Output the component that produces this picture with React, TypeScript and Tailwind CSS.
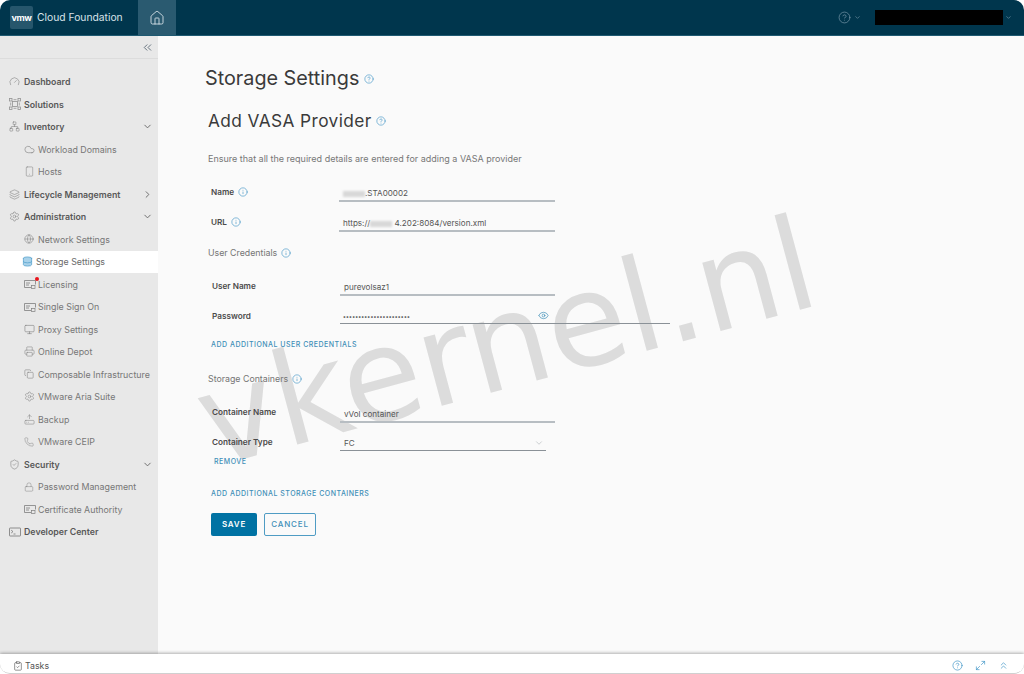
import {
  ChevronDown, ChevronRight, ChevronsLeft, ChevronsUp, Cloud, Copy, Database, Eye, Gauge, HardDriveUpload, HelpCircle,
  Home, Info, Layers, Lock, Maximize2, Monitor, Network, Phone, Printer, Settings, ClipboardCheck, ShieldCheck,
  Smartphone, Globe,
} from "lucide-react";
import type { ReactNode } from "react";

function SolutionsIcon() {
  return (
    <svg width="12" height="12" viewBox="0 0 12 12" fill="none" stroke="currentColor" strokeWidth="0.8" opacity="0.75">
      <rect x="0.5" y="0.5" width="2.5" height="2.5" />
      <rect x="9" y="0.5" width="2.5" height="2.5" />
      <rect x="0.5" y="9" width="2.5" height="2.5" />
      <rect x="9" y="9" width="2.5" height="2.5" />
      <rect x="3.5" y="3.5" width="5" height="5" />
      <path d="M4.5 1.7h3M4.5 10.3h3M1.7 4.5v3M10.3 4.5v3" />
    </svg>
  );
}

function CardIcon({ dot }: { dot?: boolean }) {
  return (
    <span className="relative flex">
      <svg width="12" height="12" viewBox="0 0 12 12" fill="none" stroke="currentColor" strokeWidth="0.8">
        <path d="M7 9.5H.5v-7h11v4" />
        <path d="M2 5h4M2 7h3" />
        <rect x="7.5" y="7.5" width="3.5" height="3" strokeWidth="0.7" />
      </svg>
      {dot && <span className="absolute -top-[1px] -right-[3px] w-[4px] h-[4px] rounded-full bg-[#e8141c]" />}
    </span>
  );
}

function ConsoleIcon() {
  return (
    <svg width="12" height="12" viewBox="0 0 12 12" fill="none" stroke="currentColor" strokeWidth="0.8">
      <rect x="0.5" y="2" width="11" height="8" rx="0.5" />
      <path d="M2.2 4.2 4 5.6 2.2 7M4.5 8h2" />
    </svg>
  );
}

function NavTop({ icon, label, chevron }: { icon: ReactNode; label: string; chevron?: "down" | "right" }) {
  return (
    <div className="h-[22.5px] flex items-center pl-[9px] pr-[5px] text-[#585858]">
      <span className="w-[15px] flex justify-start text-[#767676]">{icon}</span>
      <span className="text-[8.8px] font-semibold whitespace-nowrap">{label}</span>
      {chevron === "down" && <ChevronDown size={11} className="ml-auto text-[#666]" />}
      {chevron === "right" && <ChevronRight size={11} className="ml-auto text-[#666]" />}
    </div>
  );
}

function NavSub({ icon, label, active }: { icon: ReactNode; label: string; active?: boolean }) {
  return (
    <div className={`h-[22.5px] flex items-center text-[8.85px] whitespace-nowrap ${active ? "bg-white pl-[22px] text-[#6b6b6b]" : "pl-[24px] text-[#777]"}`}>
      <span className={`flex w-[14px] ${active ? "text-[#4b9bc9]" : "text-[#7e7e7e]"}`}>{icon}</span>
      <span>{label}</span>
    </div>
  );
}

function Sidebar() {
  return (
    <aside className="w-[158px] shrink-0 bg-[#e8e8e8] flex flex-col">
      <div className="h-[23px] shrink-0 flex items-center justify-end pr-[4px] border-b border-[#dcdcdc] text-[#4a5a68]">
        <ChevronsLeft size={13} strokeWidth={1.5} />
      </div>
      <div className="pt-[11.5px]">
        <NavTop icon={<Gauge size={11} strokeWidth={1.1} />} label="Dashboard" />
        <NavTop icon={<SolutionsIcon />} label="Solutions" />
        <NavTop icon={<Network size={11} strokeWidth={1.1} />} label="Inventory" chevron="down" />
        <NavSub icon={<Cloud size={11} strokeWidth={1.3} />} label="Workload Domains" />
        <NavSub icon={<Smartphone size={11} strokeWidth={1.1} />} label="Hosts" />
        <NavTop icon={<Layers size={11} strokeWidth={1.1} />} label="Lifecycle Management" chevron="right" />
        <NavTop icon={<Settings size={11} strokeWidth={1.1} />} label="Administration" chevron="down" />
        <NavSub icon={<Globe size={10} strokeWidth={1.3} />} label="Network Settings" />
        <NavSub active icon={<Database size={11} strokeWidth={1.5} fill="#a9d2ea" />} label="Storage Settings" />
        <NavSub icon={<CardIcon dot />} label="Licensing" />
        <NavSub icon={<CardIcon />} label="Single Sign On" />
        <NavSub icon={<Monitor size={11} strokeWidth={1.3} />} label="Proxy Settings" />
        <NavSub icon={<Printer size={11} strokeWidth={1.1} />} label="Online Depot" />
        <NavSub icon={<Copy size={10} strokeWidth={1.3} />} label="Composable Infrastructure" />
        <NavSub icon={<Settings size={11} strokeWidth={1.1} />} label="VMware Aria Suite" />
        <NavSub icon={<HardDriveUpload size={11} strokeWidth={1.1} />} label="Backup" />
        <NavSub icon={<Phone size={10} strokeWidth={1.1} />} label="VMware CEIP" />
        <NavTop icon={<ShieldCheck size={11} strokeWidth={1.1} />} label="Security" chevron="down" />
        <NavSub icon={<Lock size={10} strokeWidth={1.1} />} label="Password Management" />
        <NavSub icon={<CardIcon />} label="Certificate Authority" />
        <NavTop icon={<ConsoleIcon />} label="Developer Center" />
      </div>
    </aside>
  );
}

function InfoDot() {
  return <Info size={10} strokeWidth={1.5} className="text-[#3f94c6] shrink-0" />;
}

function HelpDot() {
  return <HelpCircle size={10} strokeWidth={1.5} className="text-[#3f94c6] shrink-0" />;
}

function Blur({ w }: { w: number }) {
  return <span className="inline-block h-[6px] bg-[#d8d8d8] blur-[1px] align-middle" style={{ width: w }} />;
}

function Field({ label, info, value, lineW = 216, thin, right }: {
  label: string; info?: boolean; value: ReactNode; lineW?: number; thin?: boolean; right?: ReactNode;
}) {
  return (
    <div className="flex h-[30px] relative z-10">
      <div className="w-[128px] shrink-0 flex items-center gap-[4px] h-[24px] text-[8.2px] font-semibold text-[#4a4a4a]">
        <span>{label}</span>
        {info && <InfoDot />}
      </div>
      <div
        className={`flex items-center justify-between pl-[4px] text-[8.1px] text-[#555] ${thin ? "h-[20px] pt-[6px] border-b border-[#8a9197]" : "h-[22px] pt-[7px] border-b-2 border-[#b7bdc2]"}`}
        style={{ width: lineW }}
      >
        <span className="whitespace-nowrap">{value}</span>
        {right}
      </div>
    </div>
  );
}

function LinkAction({ children }: { children: ReactNode }) {
  return <div className="text-[7px] font-medium tracking-[0.5px] text-[#3f8fb8] uppercase relative z-10">{children}</div>;
}

function SectionTitle({ children }: { children: ReactNode }) {
  return (
    <div className="flex items-center gap-[4px] text-[8.8px] text-[#757575] h-[14px] relative z-10">
      <span>{children}</span>
      <InfoDot />
    </div>
  );
}

function Form() {
  return (
    <main className="flex-1 min-w-0 bg-[#fafafa] pl-[47px] pt-[30px] relative overflow-hidden">
      <div className="flex items-center gap-[5px] h-[26px]">
        <h1 className="text-[19.8px] text-[#3a3a3a]">Storage Settings</h1>
        <HelpDot />
      </div>
      <div className="flex items-center gap-[4px] h-[24px] mt-[17px] ml-[3px]">
        <h2 className="text-[17.3px] text-[#3a3a3a] tracking-[0.4px]">Add VASA Provider</h2>
        <HelpDot />
      </div>
      <p className="ml-[3px] mt-[19px] h-[14px] text-[9px] leading-[14px] text-[#777]">
        Ensure that all the required details are entered for adding a VASA provider
      </p>
      <div className="mt-[14px] ml-[6px]">
        <Field label="Name" info value={<><Blur w={22} /><span>.STA00002</span></>} />
        <Field label="URL" info value={<>https://<Blur w={22} /> 4.202:8084/version.xml</>} />
      </div>
      <div className="ml-[3px] mt-[6px]">
        <SectionTitle>User Credentials</SectionTitle>
      </div>
      <div className="mt-[14px] ml-[7px]">
        <Field label="User Name" value="purevolsaz1" lineW={215} />
        <div className="flex h-[22px] relative z-10">
          <div className="w-[128px] shrink-0 h-[24px] flex items-center text-[8.2px] font-semibold text-[#4a4a4a]">Password</div>
          <div className="w-[330px] h-[20px] pt-[6px] border-b border-[#8a9197] flex items-center pl-[3px] text-[#555]">
            <div className="w-[206px] flex items-center justify-between">
              <span className="text-[6px] tracking-[0.2px] font-bold leading-none">••••••••••••••••••••••</span>
              <Eye size={11} strokeWidth={1.5} className="text-[#3f8fb8] -mt-[2px]" />
            </div>
          </div>
        </div>
      </div>
      <div className="ml-[6px] mt-[14px]">
        <LinkAction>Add additional user credentials</LinkAction>
      </div>
      <div className="ml-[3px] mt-[21px]">
        <SectionTitle>Storage Containers</SectionTitle>
      </div>
      <div className="mt-[15px] ml-[7px]">
        <Field label="Container Name" value="vVol container" lineW={215} />
        <Field
          label="Container Type"
          value="FC"
          lineW={206}
          thin
          right={<ChevronDown size={10} strokeWidth={1} className="text-[#8a9197] mr-[2px]" />}
        />
      </div>
      <div className="ml-[9px] -mt-[4px]">
        <LinkAction>Remove</LinkAction>
      </div>
      <div className="ml-[6px] mt-[22px]">
        <LinkAction>Add additional storage containers</LinkAction>
      </div>
      <div className="ml-[6px] mt-[13px] flex gap-[7px] relative z-10">
        <button className="w-[46px] h-[23px] rounded-[2px] bg-[#0072a3] text-white text-[8px] font-semibold tracking-[0.8px]">SAVE</button>
        <button className="w-[52px] h-[23px] rounded-[2px] border border-[#4f9cc4] text-[#3f8fb8] text-[8px] font-medium tracking-[0.8px]">CANCEL</button>
      </div>
      {/* watermark sits on top of the blank page area */}
      <div className="absolute left-[32px] top-[242px] -rotate-[15deg] origin-center text-[129px] leading-none text-[#dcdcdc] whitespace-nowrap pointer-events-none font-['DejaVu_Sans',sans-serif]">
        vkernel.nl
      </div>
    </main>
  );
}

export default function App() {
  return (
    <div className="w-[1024px] h-[674px] bg-white overflow-hidden font-['Inter',sans-serif]">
      <div className="h-full rounded-[10px] overflow-hidden flex flex-col border-b border-[#d0d0d0]">
        <header className="h-[36px] shrink-0 bg-[#00364d] flex items-stretch text-white border-b border-[#1f5a72]">
          <div className="flex items-center pl-[10px] w-[138px]">
            <div className="w-[23px] h-[23px] rounded-[2px] bg-[#26566c] flex items-center justify-center text-[9px] font-bold tracking-[-0.5px]">vmw</div>
            <span className="ml-[4px] text-[10.3px] text-[#d8e3e9] whitespace-nowrap">Cloud Foundation</span>
          </div>
          <div className="w-[38px] bg-[#2a5a70] flex items-center justify-center">
            <Home size={16} strokeWidth={1.25} className="text-[#e3ecf0]" />
          </div>
          <div className="ml-auto flex items-center pr-[12px] text-[#7c9cad]">
            <HelpCircle size={13} strokeWidth={1.25} />
            <ChevronDown size={7} strokeWidth={2} className="ml-[3px]" />
            <div className="w-[128px] h-[15px] bg-black ml-[14.5px]" />
            <ChevronDown size={7} strokeWidth={2} className="ml-[2px]" />
          </div>
        </header>
        <div className="flex-1 min-h-0 flex">
          <Sidebar />
          <Form />
        </div>
        <footer className="h-[19px] shrink-0 bg-white flex items-center pt-[4px] pl-[13px] pr-[15px] text-[#555] shadow-[0_-1px_3px_rgba(0,0,0,0.3)] relative z-20">
          <ClipboardCheck size={10} strokeWidth={1.5} />
          <span className="ml-[2px] text-[8.8px]">Tasks</span>
          <div className="ml-auto flex items-center gap-[12px] text-[#3f94c6]">
            <HelpCircle size={11} strokeWidth={1.5} />
            <Maximize2 size={11} strokeWidth={1.5} />
            <ChevronsUp size={11} strokeWidth={1.5} />
          </div>
        </footer>
      </div>
    </div>
  );
}
